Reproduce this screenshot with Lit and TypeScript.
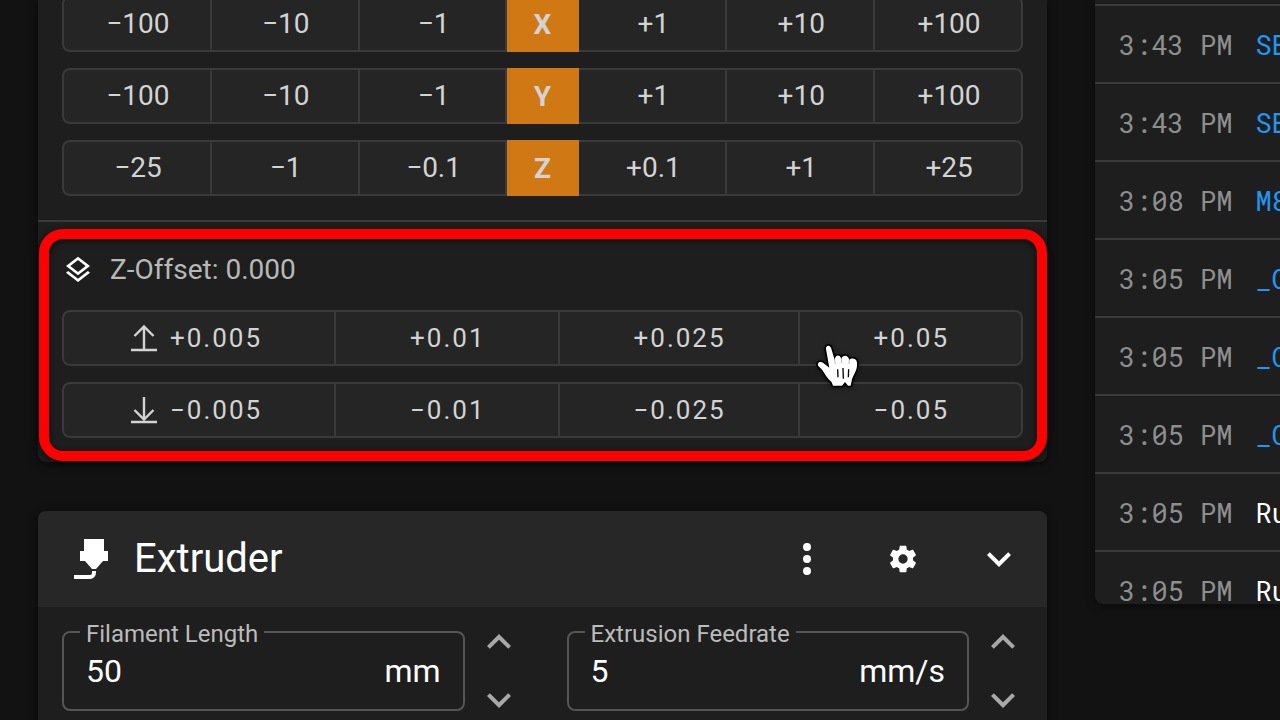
import { LitElement, html, css, svg } from "lit";
import { customElement } from "lit/decorators.js";

const ICONS = {
  layers:
    "M12,18.54L19.37,12.8L21,14.07L12,21.07L3,14.07L4.62,12.81L12,18.54M12,16L3,9L12,2L21,9L12,16M12,4.53L6.26,9L12,13.47L17.74,9L12,4.53Z",
  nozzle:
    "M7,2H17V8H19V13H16.5L13,17H11L7.5,13H5V8H7V2M10,22H2V20H10A1,1 0 0,0 11,19V18H13V19A3,3 0 0,1 10,22Z",
  dots:
    "M12,16A2,2 0 0,1 14,18A2,2 0 0,1 12,20A2,2 0 0,1 10,18A2,2 0 0,1 12,16M12,10A2,2 0 0,1 14,12A2,2 0 0,1 12,14A2,2 0 0,1 10,12A2,2 0 0,1 12,10M12,4A2,2 0 0,1 14,6A2,2 0 0,1 12,8A2,2 0 0,1 10,6A2,2 0 0,1 12,4Z",
  cog:
    "M12,15.5A3.5,3.5 0 0,1 8.5,12A3.5,3.5 0 0,1 12,8.5A3.5,3.5 0 0,1 15.5,12A3.5,3.5 0 0,1 12,15.5M19.43,12.97C19.47,12.65 19.5,12.33 19.5,12C19.5,11.67 19.47,11.34 19.43,11L21.54,9.37C21.73,9.22 21.78,8.95 21.66,8.73L19.66,5.27C19.54,5.05 19.27,4.96 19.05,5.05L16.56,6.05C16.04,5.66 15.5,5.32 14.87,5.07L14.5,2.42C14.46,2.18 14.25,2 14,2H10C9.75,2 9.54,2.18 9.5,2.42L9.13,5.07C8.5,5.32 7.96,5.66 7.44,6.05L4.95,5.05C4.73,4.96 4.46,5.05 4.34,5.27L2.34,8.73C2.21,8.95 2.27,9.22 2.46,9.37L4.57,11C4.53,11.34 4.5,11.67 4.5,12C4.5,12.33 4.53,12.65 4.57,12.97L2.46,14.63C2.27,14.78 2.21,15.05 2.34,15.27L4.34,18.73C4.46,18.95 4.73,19.03 4.95,18.95L7.44,17.94C7.96,18.34 8.5,18.68 9.13,18.93L9.5,21.58C9.54,21.82 9.75,22 10,22H14C14.25,22 14.46,21.82 14.5,21.58L14.87,18.93C15.5,18.67 16.04,18.34 16.56,17.94L19.05,18.95C19.27,19.03 19.54,18.95 19.66,18.73L21.66,15.27C21.78,15.05 21.73,14.78 21.54,14.63L19.43,12.97Z",
  down: "M7.41,8.58L12,13.17L16.59,8.58L18,10L12,16L6,10L7.41,8.58Z",
  up: "M7.41,15.41L12,10.83L16.59,15.41L18,14L12,8L6,14L7.41,15.41Z",
};

const icon = (path: string, size: number) => html`
  <svg width=${size} height=${size} viewBox="0 0 24 24" fill="currentColor" aria-hidden="true">
    <path d=${path}></path>
  </svg>
`;

const arrow = (dir: string) => html`
  <svg class="arrow" width="28" height="32" viewBox="0 0 28 32" fill="none" stroke="currentColor" stroke-width="2.400" aria-hidden="true">
    ${dir === "up"
      ? svg`<path d="M14 28V4M4.500 14L14 4.500L23.500 14M1 28H27"></path>`
      : svg`<path d="M14 3V26M4.500 16L14 25.500L23.500 16M1 28H27"></path>`}
  </svg>
`;

const pointer = html`
  <svg class="pointer" width="44" height="46" viewBox="170 368 132 138" aria-hidden="true">
    <path
      d="M200 390C198 377 213 375 216 388L226 422C228 405 242 405 246 419C250 406 266 406 270 422C276 415 292 416 293 430C295 452 284 462 278 480L274 499H266L257 488L248 499H221L217 489C204 478 196 463 189 452L177 440C172 429 184 424 193 432L210 445Z"
      fill="#fff" stroke="#000" stroke-width="10" stroke-linejoin="round" paint-order="stroke"></path>
    <path d="M235 450L236 474M251 446L252 478M268 450L267 474" stroke="#000" stroke-width="4"></path>
    <path d="M226 420L228 434M246 418L247 432M270 421L269 434" stroke="#999" stroke-width="2"></path>
  </svg>
`;

@customElement("axis-row")
class AxisRow extends LitElement {
  static properties = { axis: {}, steps: { attribute: false } };
  declare axis: string;
  declare steps: string[];

  static styles = css`
    .group { display: flex; height: 56px; }
    button {
      box-sizing: border-box;
      flex: 1 1 0;
      min-width: 0;
      margin: 0;
      padding: 0 0 0 2px;
      border: 2px solid #3a3a3a;
      border-right-width: 0;
      background: #252525;
      color: #d3d3d3;
      font: 400 28px/32px Roboto, sans-serif;
    }
    .first { border-radius: 8px 0 0 8px; }
    .last { border-right-width: 2px; border-radius: 0 8px 8px 0; }
    .before { border-right-width: 2px; }
    .after { border-left-width: 0; }
    .axis {
      flex: 0 0 72px;
      padding: 2px 2px 0 0;
      border: 0;
      background: #cf7814;
      font-weight: 700;
    }
  `;

  render() {
    const names = ["first", "", "before", "after", "", "last"];
    const cell = (s: string, i: number) => html`<button class=${names[i]}>${s}</button>`;
    return html`
      <div class="group" role="group" aria-label=${this.axis}>
        ${this.steps.slice(0, 3).map((s, i) => cell(s, i))}
        <button class="axis">${this.axis}</button>
        ${this.steps.slice(3).map((s, i) => cell(s, i + 3))}
      </div>
    `;
  }
}

@customElement("number-field")
class NumberField extends LitElement {
  static properties = { label: {}, value: {}, unit: {} };
  declare label: string;
  declare value: string;
  declare unit: string;

  static styles = css`
    :host { display: block; min-width: 0; }
    .wrap { display: flex; gap: 10px; height: 80px; }
    .field {
      position: relative;
      box-sizing: border-box;
      display: flex;
      align-items: center;
      flex: 1;
      min-width: 0;
      padding: 0 22px;
      border: 2px solid #555;
      border-radius: 8px;
      color: #fff;
      font: 400 32px/40px Roboto, sans-serif;
    }
    label {
      position: absolute;
      top: -13px;
      left: 16px;
      padding: 0 6px;
      background: #1e1e1e;
      color: #bbb;
      font-size: 24px;
      line-height: 28px;
    }
    input {
      flex: 1;
      width: 0;
      min-width: 0;
      padding: 0;
      border: 0;
      outline: 0;
      background: none;
      color: inherit;
      font: inherit;
    }
    .spin { display: flex; flex-direction: column; justify-content: space-between; }
    button {
      display: flex;
      align-items: center;
      justify-content: center;
      width: 48px;
      height: 22px;
      padding: 0;
      border: 0;
      background: none;
      color: #a8a8a8;
    }
    svg { flex: none; }
  `;

  render() {
    return html`
      <div class="wrap">
        <div class="field">
          <label for="value">${this.label}</label>
          <input id="value" type="text" inputmode="decimal" .value=${this.value} />
          <span>${this.unit}</span>
        </div>
        <div class="spin">
          <button aria-label="Increase">${icon(ICONS.up, 48)}</button>
          <button aria-label="Decrease">${icon(ICONS.down, 48)}</button>
        </div>
      </div>
    `;
  }
}

@customElement("app-root")
class AppRoot extends LitElement {
  static styles = css`
    :host {
      display: block;
      height: 100vh;
      overflow: hidden;
      background: #121212;
      color: #fff;
      font-family: Roboto, sans-serif;
    }
    .page {
      display: grid;
      grid-template-columns: minmax(0, 1fr) 185px;
      gap: 48px;
      align-items: start;
      padding-left: 38px;
    }
    .column { display: flex; flex-direction: column; gap: 49px; min-width: 0; }
    .card {
      background: #1e1e1e;
      border-radius: 8px;
      box-shadow: 0 2px 8px rgba(0, 0, 0, 0.5);
    }
    .flush { border-top-left-radius: 0; border-top-right-radius: 0; }
    .axes {
      display: grid;
      gap: 16px;
      margin-top: -4px;
      padding: 0 24px 24px;
      border-bottom: 2px solid #3a3a3a;
    }
    .offset {
      position: relative;
      display: grid;
      gap: 16px;
      padding: 32px 24px 24px;
    }
    .frame {
      position: absolute;
      inset: 7px 0 1px 1px;
      border: 10px solid #f00;
      border-radius: 24px;
      filter: drop-shadow(0 2px 3px rgba(0, 0, 0, 0.7));
      pointer-events: none;
    }
    .caption {
      display: flex;
      align-items: center;
      gap: 16px;
      height: 32px;
      margin-bottom: 8px;
      font-size: 28px;
      line-height: 32px;
    }
    .caption span { color: #b8b8b8; }
    .steps { display: flex; height: 56px; }
    .steps button {
      position: relative;
      box-sizing: border-box;
      display: flex;
      align-items: center;
      justify-content: center;
      flex: 1 1 auto;
      margin: 0;
      padding: 0 23px 0 25px;
      border: 2px solid #3a3a3a;
      border-right-width: 0;
      background: #252525;
      color: #d3d3d3;
      font: 400 26px/32px Roboto, sans-serif;
      letter-spacing: 2px;
    }
    .steps button:first-child { border-radius: 8px 0 0 8px; }
    .steps button:last-child { border-right-width: 2px; border-radius: 0 8px 8px 0; }
    .arrow { flex: none; margin: 0 12px 0 -8px; }
    .pointer {
      position: absolute;
      top: 30px;
      left: 16px;
      z-index: 2;
      overflow: visible;
      filter: drop-shadow(0 1px 2px rgba(0, 0, 0, 0.5));
    }
    .head {
      display: flex;
      align-items: center;
      gap: 16px;
      height: 96px;
      padding: 0 24px 0 32px;
      border-radius: 8px 8px 0 0;
      background: #272727;
    }
    h2 { flex: 1; margin: 0; font-weight: 400; font-size: 40px; line-height: 48px; }
    .tools { display: flex; gap: 48px; }
    .tools button {
      display: flex;
      align-items: center;
      justify-content: center;
      width: 48px;
      height: 48px;
      padding: 0;
      border: 0;
      background: none;
      color: #fff;
    }
    .fields {
      display: grid;
      grid-template-columns: repeat(2, minmax(0, 1fr));
      gap: 44px;
      padding: 24px 20px 24px 24px;
    }
    .log {
      height: 604px;
      overflow: hidden;
      border-radius: 0 0 0 8px;
    }
    .list { margin: 0; padding: 4px 0 0; list-style: none; }
    .line {
      box-sizing: border-box;
      display: flex;
      align-items: center;
      gap: 23px;
      height: 78px;
      padding: 2px 0 0 24px;
      border-top: 2px solid #3a3a3a;
      white-space: nowrap;
      font: 400 27px/36px "Roboto Mono", "DejaVu Sans Mono", monospace;
    }
    .line time { color: #8e8e8e; }
    .command { color: #2196f3; }
  `;

  private axes: [string, string[]][] = [
    ["X", ["−100", "−10", "−1", "+1", "+10", "+100"]],
    ["Y", ["−100", "−10", "−1", "+1", "+10", "+100"]],
    ["Z", ["−25", "−1", "−0.1", "+0.1", "+1", "+25"]],
  ];

  private log: [string, string, boolean][] = [
    ["3:43 PM", "SE", true],
    ["3:43 PM", "SE", true],
    ["3:08 PM", "M8", true],
    ["3:05 PM", "_C", true],
    ["3:05 PM", "_C", true],
    ["3:05 PM", "_C", true],
    ["3:05 PM", "Ru", false],
    ["3:05 PM", "Ru", false],
  ];

  render() {
    return html`
      <main class="page">
        <div class="column">
          <section class="card flush">
            <div class="axes">
              ${this.axes.map(([a, s]) => html`<axis-row .axis=${a} .steps=${s}></axis-row>`)}
            </div>
            <div class="offset">
              <div class="caption">${icon(ICONS.layers, 32)}<span>Z-Offset: 0.000</span></div>
              <div class="steps">
                <button>${arrow("up")}+0.005</button>
                <button>+0.01</button>
                <button>+0.025</button>
                <button>+0.05${pointer}</button>
              </div>
              <div class="steps">
                <button>${arrow("down")}−0.005</button>
                <button>−0.01</button>
                <button>−0.025</button>
                <button>−0.05</button>
              </div>
              <div class="frame"></div>
            </div>
          </section>
          <section class="card">
            <header class="head">
              ${icon(ICONS.nozzle, 48)}
              <h2>Extruder</h2>
              <div class="tools">
                <button aria-label="More">${icon(ICONS.dots, 48)}</button>
                <button aria-label="Settings">${icon(ICONS.cog, 32)}</button>
                <button aria-label="Collapse">${icon(ICONS.down, 48)}</button>
              </div>
            </header>
            <div class="fields">
              <number-field label="Filament Length" value="50" unit="mm"></number-field>
              <number-field label="Extrusion Feedrate" value="5" unit="mm/s"></number-field>
            </div>
          </section>
        </div>
        <section class="card log">
          <ol class="list">
            ${this.log.map(
              ([t, m, cmd]) => html`
                <li class="line"><time>${t}</time><span class=${cmd ? "command" : ""}>${m}</span></li>
              `
            )}
          </ol>
        </section>
      </main>
    `;
  }
}
